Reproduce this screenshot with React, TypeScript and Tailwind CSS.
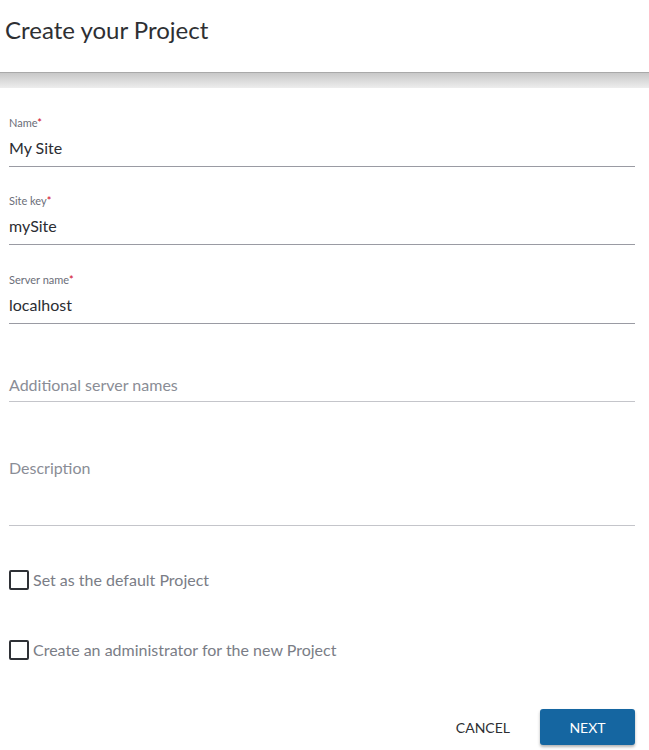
import React from "react";

const font = { fontFamily: "Lato, 'Open Sans', sans-serif" };

function Field({
  label,
  value,
  placeholder,
  className,
}: {
  label?: string;
  value?: string;
  placeholder?: string;
  className?: string;
}) {
  return (
    <div className={className}>
      {label ? (
        <div className="h-[16px] text-[11px] leading-[16px] text-[#6b6e78]">
          {label}
          <span className="text-[#d0021b]">*</span>
        </div>
      ) : null}
      <div
        className={`h-[28px] text-[16px] leading-[28px] ${
          value ? "mt-[3px] text-[#2b2d33]" : "text-[#8a8d96]"
        }`}
      >
        {value ?? placeholder}
      </div>
      <div
        className={`h-px ${value ? "mt-[4px] bg-[#9a9ba3]" : "mt-[2px] bg-[#c4c5ca]"}`}
      />
    </div>
  );
}

function Check({ label, className }: { label: string; className?: string }) {
  return (
    <label className={`flex items-center gap-[4px] ${className ?? ""}`}>
      <span className="h-[20px] w-[20px] rounded-[2px] border-2 border-[#2f3136]" />
      <span className="text-[16px] leading-[20px] text-[#7a7d86]">{label}</span>
    </label>
  );
}

export default function App() {
  return (
    <div className="h-[750px] w-[649px] bg-white" style={font}>
      <div className="h-[72px] pl-[5px] pt-[14px]">
        <h1 className="text-[24px] font-normal leading-[32px] text-[#2e2f33]">
          Create your Project
        </h1>
      </div>
      <div className="h-[16px] border-t border-[#a9a9a9] bg-gradient-to-b from-[#c8c8c8] to-[#ededed]" />

      <div className="px-[9px] pr-[14px]">
        <Field label="Name" value="My Site" className="mt-[27px]" />
        <Field label="Site key" value="mySite" className="mt-[26px]" />
        <Field label="Server name" value="localhost" className="mt-[27px]" />
        <Field placeholder="Additional server names" className="mt-[47px]" />
        <div className="mt-[52px]">
          <div className="h-[28px] text-[16px] leading-[28px] text-[#8a8d96]">
            Description
          </div>
          <div className="mt-[43px] h-px bg-[#c4c5ca]" />
        </div>
        <Check label="Set as the default Project" className="mt-[44px]" />
        <Check
          label="Create an administrator for the new Project"
          className="mt-[50px]"
        />
        <div className="mt-[49px] flex items-center justify-end gap-[30px]">
          <button className="text-[14px] text-[#2e2f33]">CANCEL</button>
          <button className="h-[36px] w-[95px] rounded-[3px] bg-[#1566a1] text-[14px] text-white shadow-[0_2px_3px_rgba(0,0,0,0.3)]">
            NEXT
          </button>
        </div>
      </div>
    </div>
  );
}
